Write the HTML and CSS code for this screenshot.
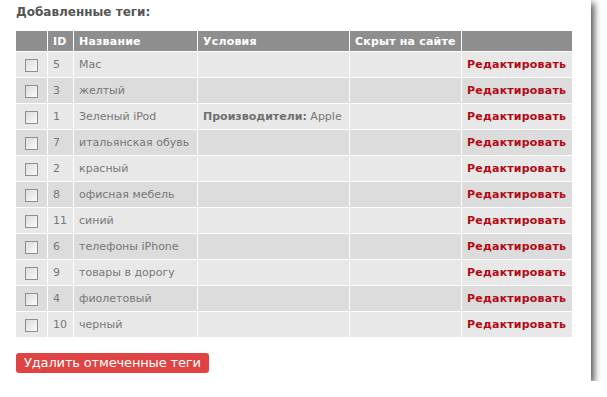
FILE: index.html
```html
<!DOCTYPE html>
<html lang="ru">
<head>
    <meta charset="UTF-8">
    <title>Добавленные теги</title>
    <link rel="stylesheet" href="styles.css">
</head>
<body>
    <div class="panel">
        <h2 class="panel-title">Добавленные теги:</h2>

        <table class="tags-table">
            <colgroup>
                <col class="col-check">
                <col class="col-id">
                <col class="col-name">
                <col class="col-cond">
                <col class="col-hidden">
                <col class="col-edit">
            </colgroup>
            <thead>
                <tr>
                    <th></th>
                    <th>ID</th>
                    <th>Название</th>
                    <th>Условия</th>
                    <th>Скрыт на сайте</th>
                    <th></th>
                </tr>
            </thead>
            <tbody>
                <tr>
                    <td class="check"><input type="checkbox" class="cb"></td>
                    <td>5</td>
                    <td>Mac</td>
                    <td></td>
                    <td></td>
                    <td><a href="#" class="edit-link">Редактировать</a></td>
                </tr>
                <tr>
                    <td class="check"><input type="checkbox" class="cb"></td>
                    <td>3</td>
                    <td>желтый</td>
                    <td></td>
                    <td></td>
                    <td><a href="#" class="edit-link">Редактировать</a></td>
                </tr>
                <tr>
                    <td class="check"><input type="checkbox" class="cb"></td>
                    <td>1</td>
                    <td>Зеленый iPod</td>
                    <td><strong>Производители:</strong> Apple</td>
                    <td></td>
                    <td><a href="#" class="edit-link">Редактировать</a></td>
                </tr>
                <tr>
                    <td class="check"><input type="checkbox" class="cb"></td>
                    <td>7</td>
                    <td>итальянская обувь</td>
                    <td></td>
                    <td></td>
                    <td><a href="#" class="edit-link">Редактировать</a></td>
                </tr>
                <tr>
                    <td class="check"><input type="checkbox" class="cb"></td>
                    <td>2</td>
                    <td>красный</td>
                    <td></td>
                    <td></td>
                    <td><a href="#" class="edit-link">Редактировать</a></td>
                </tr>
                <tr>
                    <td class="check"><input type="checkbox" class="cb"></td>
                    <td>8</td>
                    <td>офисная мебель</td>
                    <td></td>
                    <td></td>
                    <td><a href="#" class="edit-link">Редактировать</a></td>
                </tr>
                <tr>
                    <td class="check"><input type="checkbox" class="cb"></td>
                    <td>11</td>
                    <td>синий</td>
                    <td></td>
                    <td></td>
                    <td><a href="#" class="edit-link">Редактировать</a></td>
                </tr>
                <tr>
                    <td class="check"><input type="checkbox" class="cb"></td>
                    <td>6</td>
                    <td>телефоны iPhone</td>
                    <td></td>
                    <td></td>
                    <td><a href="#" class="edit-link">Редактировать</a></td>
                </tr>
                <tr>
                    <td class="check"><input type="checkbox" class="cb"></td>
                    <td>9</td>
                    <td>товары в дорогу</td>
                    <td></td>
                    <td></td>
                    <td><a href="#" class="edit-link">Редактировать</a></td>
                </tr>
                <tr>
                    <td class="check"><input type="checkbox" class="cb"></td>
                    <td>4</td>
                    <td>фиолетовый</td>
                    <td></td>
                    <td></td>
                    <td><a href="#" class="edit-link">Редактировать</a></td>
                </tr>
                <tr>
                    <td class="check"><input type="checkbox" class="cb"></td>
                    <td>10</td>
                    <td>черный</td>
                    <td></td>
                    <td></td>
                    <td><a href="#" class="edit-link">Редактировать</a></td>
                </tr>
            </tbody>
        </table>

        <button class="btn-delete">Удалить отмеченные теги</button>
    </div>
</body>
</html>
```

FILE: styles.css
```css
body {
    margin: 0;
    background: #fff;
    font-family: "DejaVu Sans", Verdana, sans-serif;
}
.panel {
    width: 591px;
    height: 381px;
    box-sizing: border-box;
    padding: 4px 19px 0 16px;
    background: #fff;
    box-shadow: 3px 3px 7px rgba(0,0,0,0.7);
}
.panel-title {
    margin: 0;
    font-size: 12px;
    line-height: 16px;
    font-weight: bold;
    color: #555;
}
.tags-table {
    margin: 10px -1px 0;
    border-collapse: separate;
    border-spacing: 1px;
    table-layout: fixed;
    width: 558px;
    font-size: 11px;
    color: #777;
}
.col-check { width: 31px; }
.col-id { width: 25px; }
.col-name { width: 123px; }
.col-cond { width: 151px; }
.col-hidden { width: 111px; }
.col-edit { width: 110px; }
.tags-table th {
    height: 20px;
    padding: 0 5px;
    background: #8e8e8e;
    color: #fff;
    font-weight: bold;
    text-align: left;
    white-space: nowrap;
    letter-spacing: 0.2px;
}
.tags-table td {
    height: 25px;
    padding: 0 5px;
    white-space: nowrap;
    overflow: hidden;
}
.tags-table tbody tr:nth-child(odd) td {
    background: #e8e8e8;
}
.tags-table tbody tr:nth-child(even) td {
    background: #dcdcdc;
}
.tags-table td strong {
    color: #707070;
}
.tags-table td.check {
    text-align: center;
    padding: 0;
}
.cb {
    appearance: none;
    -webkit-appearance: none;
    display: block;
    margin: 1px auto 0;
    width: 13px;
    height: 13px;
    border: 1px solid #8f8f8f;
    box-sizing: border-box;
    background: linear-gradient(135deg, #dcdcdc, #fbfbfb);
}
.edit-link {
    color: #b30a14;
    font-weight: bold;
    text-decoration: none;
    letter-spacing: 0.2px;
}
.btn-delete {
    margin-top: 15px;
    height: 20px;
    padding: 0 8px;
    border: none;
    border-radius: 3px;
    background: #e04343;
    color: #fff;
    font-family: "DejaVu Sans", Verdana, sans-serif;
    font-size: 13px;
    line-height: 20px;
    letter-spacing: -0.15px;
}
```
